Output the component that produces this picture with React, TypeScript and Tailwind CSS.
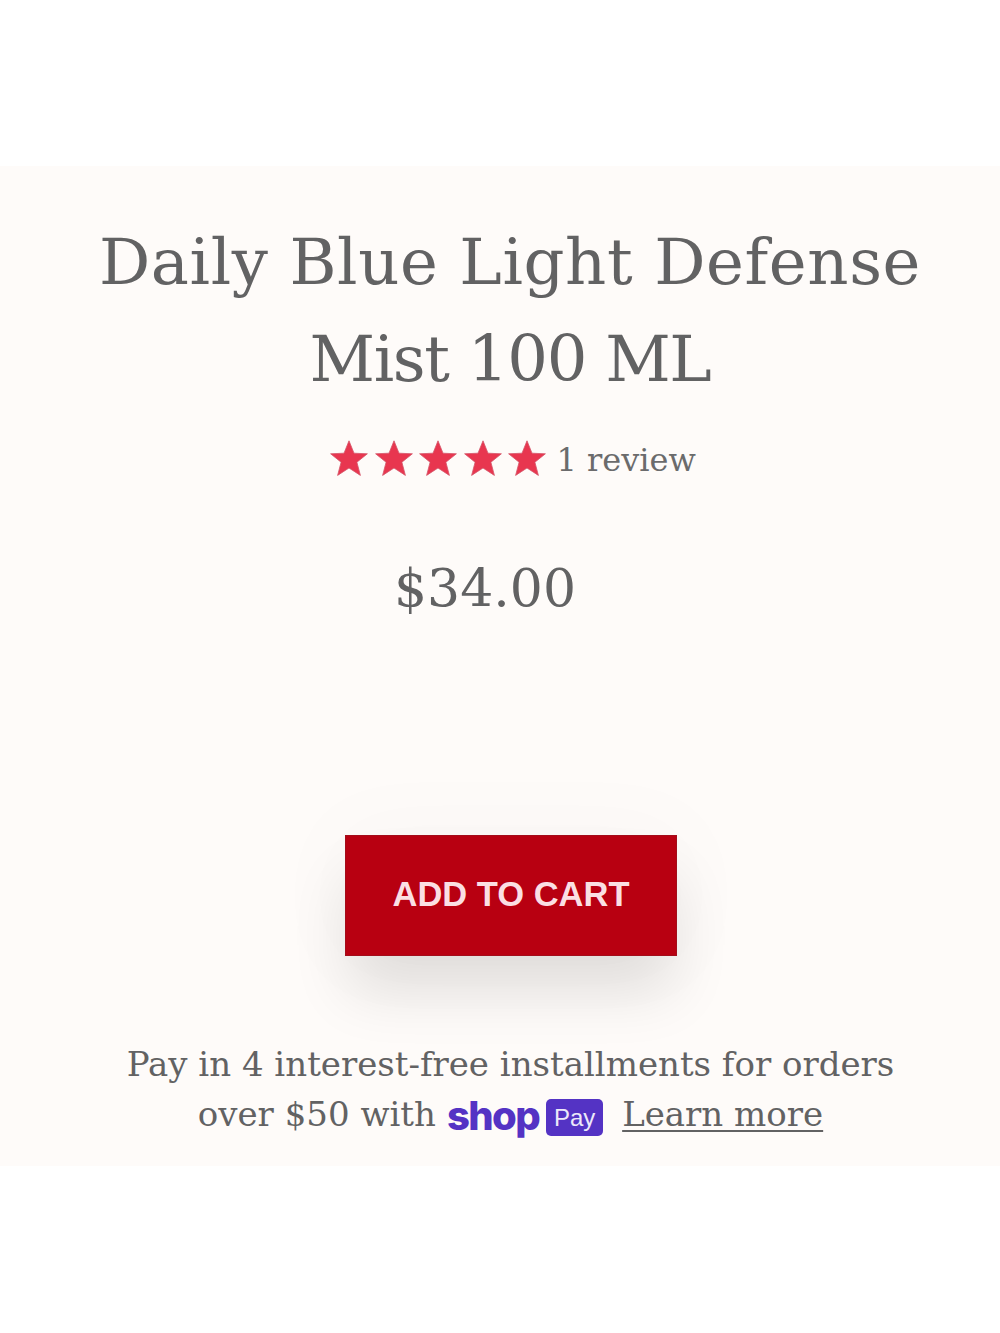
const serif = "font-['DejaVu_Serif',serif]";

function Star() {
  return (
    <svg viewBox="0 0 38 36" className="w-[38px] h-[36px] shrink-0" aria-hidden="true">
      <path d="M19 0.8 L24 13.2 L37.4 13.8 L26.9 22.2 L30.4 35.4 L19 28 L7.6 35.4 L11.1 22.2 L0.6 13.8 L14 13.2 Z" fill="#e8364f" stroke="#d4566a" strokeWidth="0.8" />
    </svg>
  );
}

export default function App() {
  return (
    <div className={`w-[1000px] h-[1333px] bg-white pt-[166px] ${serif}`}>
      <main className="h-[1000px] bg-[#fefbf9] flex flex-col items-center text-[#626263]">
        <h1 className="mt-[48px] w-full pl-[20px] text-center text-[64px] leading-[97px] font-normal">
          <span className="block tracking-[0.6px] whitespace-nowrap">Daily Blue Light Defense</span>
          <span className="block tracking-[-1.3px] whitespace-nowrap">Mist 100 ML</span>
        </h1>
        <div className="mt-[32px] ml-[26px] h-[40px] flex items-center">
          <div className="flex gap-[6.6px] -mt-[4px]">
            <Star />
            <Star />
            <Star />
            <Star />
            <Star />
          </div>
          <span className="ml-[10px] text-[32px] leading-[40px] text-[#6b6b6c]">1 review</span>
        </div>
        <p className="mt-[77px] mr-[30px] text-[52px] leading-[62px]">$34.00</p>
        <button className="mt-[216px] ml-[22px] w-[332px] h-[121px] pb-[2px] bg-[#b80011] border border-[#a30d1a] text-[#fbdfe3] font-['Liberation_Sans',sans-serif] font-bold text-[34.5px] shadow-[0_40px_60px_-4px_rgba(0,0,0,0.11),0_0_90px_10px_rgba(60,0,0,0.025)]">
          ADD TO CART
        </button>
        <p className="mt-[83px] ml-[21px] text-[34px] leading-[50px] text-center whitespace-nowrap">
          Pay in 4 interest-free installments for orders
          <br />
          <span className="inline-flex items-center">
            over $50 with
            <span className="ml-[11px] translate-y-[2px] font-['Inter',sans-serif] font-extrabold text-[40px] leading-[50px] tracking-[-1.6px] text-[#5433c4]">shop</span>
            <span className="ml-[7px] translate-y-[3px] w-[57px] h-[37px] rounded-[5px] bg-[#5433c4] text-[#ece8fa] font-['Liberation_Sans',sans-serif] text-[24px] leading-[37px]">Pay</span>
            <a className="ml-[19px] underline decoration-2 underline-offset-[4px]">Learn more</a>
          </span>
        </p>
      </main>
    </div>
  );
}
